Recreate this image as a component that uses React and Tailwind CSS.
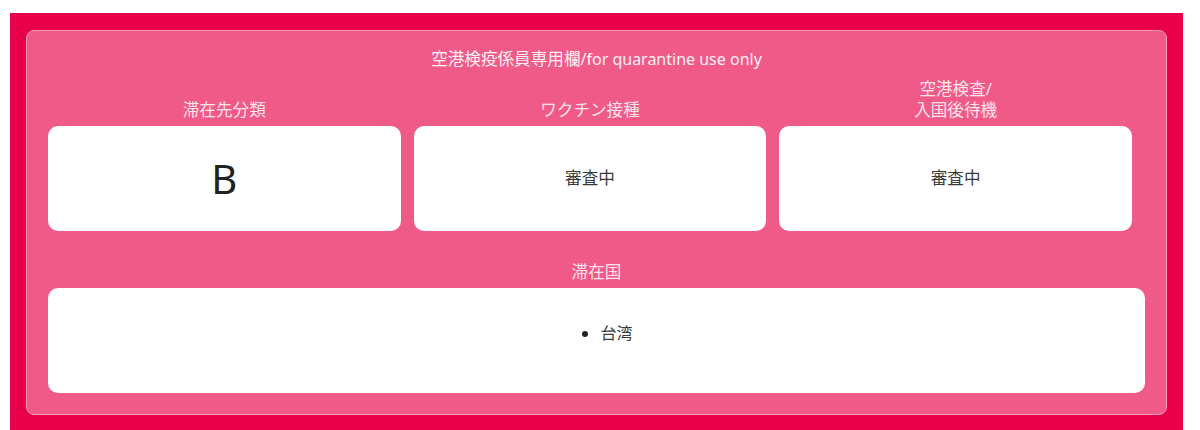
export default function App() {
  const columns = [
    { key: 'category', label: ['滞在先分類'], value: 'B', big: true },
    { key: 'vaccine', label: ['ワクチン接種'], value: '審査中' },
    { key: 'test', label: ['空港検査/', '入国後待機'], value: '審査中' }
  ];

  return (
    <div className="min-h-[430px] bg-white pl-[10px] pt-[13px] overflow-hidden" style={{ fontFamily: '"Noto Sans", "Noto Sans CJK JP", sans-serif' }}>
      <div className="w-[1173px] bg-[#e8004b] px-4 pt-[17px] pb-8">
        <div className="bg-[#f05a88] border border-[#f69abb] rounded-[8px] px-[21px] pt-4 pb-[21px]">
          <p className="text-center text-base leading-6 text-[#fdf0f4]">
            <span className="text-[16.6px]">空港検疫係員専用欄</span>/for quarantine use only
          </p>

          <div className="grid grid-cols-3 mt-[7px]">
            {columns.map(col => (
              <div key={col.key} className="flex flex-col justify-end pr-[13px]">
                <div className="text-center text-[16.6px] leading-[21px] text-[#fde3ec] mb-[6px]">
                  {col.label.map(line => (
                    <div key={line}>{line}</div>
                  ))}
                </div>
                <div className="h-[105px] bg-white rounded-[10px] flex items-center justify-center text-[#3a3a3a]">
                  {col.big ? (
                    <span className="text-[40px] leading-none text-[#222]">{col.value}</span>
                  ) : (
                    <span className="text-[16.6px]">{col.value}</span>
                  )}
                </div>
              </div>
            ))}
          </div>

          <p className="mt-[30px] mb-[6px] text-center text-[16.6px] leading-[21px] text-[#fde3ec]">滞在国</p>
          <div className="h-[105px] bg-white rounded-[10px] flex items-center justify-center pb-[15px] text-[#3a3a3a]">
            <ul className="list-disc pl-10 text-base marker:text-[#222]">
              <li>台湾</li>
            </ul>
          </div>
        </div>
      </div>
    </div>
  );
}
